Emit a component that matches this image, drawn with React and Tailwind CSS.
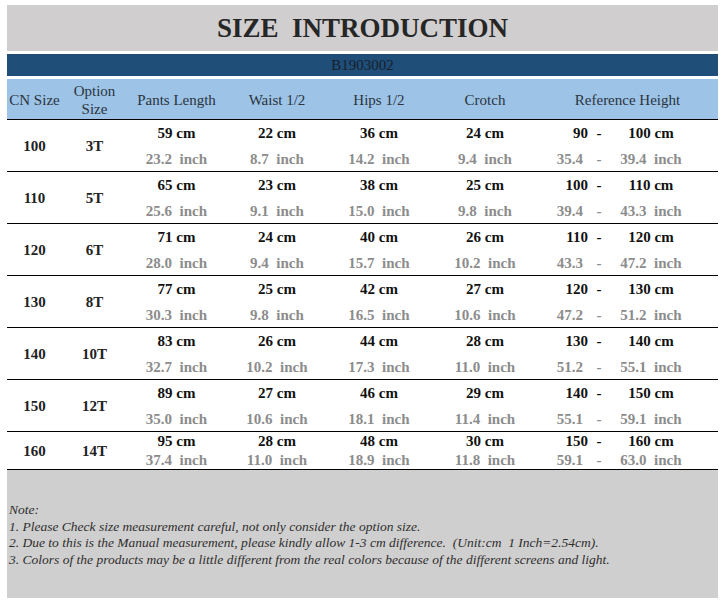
import React from 'react';

const rows = [
    ['100', '3T', ['59', '23.2'], ['22', '8.7'], ['36', '14.2'], ['24', '9.4'], ['90', '100', '35.4', '39.4']],
    ['110', '5T', ['65', '25.6'], ['23', '9.1'], ['38', '15.0'], ['25', '9.8'], ['100', '110', '39.4', '43.3']],
    ['120', '6T', ['71', '28.0'], ['24', '9.4'], ['40', '15.7'], ['26', '10.2'], ['110', '120', '43.3', '47.2']],
    ['130', '8T', ['77', '30.3'], ['25', '9.8'], ['42', '16.5'], ['27', '10.6'], ['120', '130', '47.2', '51.2']],
    ['140', '10T', ['83', '32.7'], ['26', '10.2'], ['44', '17.3'], ['28', '11.0'], ['130', '140', '51.2', '55.1']],
    ['150', '12T', ['89', '35.0'], ['27', '10.6'], ['46', '18.1'], ['29', '11.4'], ['140', '150', '55.1', '59.1']],
    ['160', '14T', ['95', '37.4'], ['28', '11.0'], ['48', '18.9'], ['30', '11.8'], ['150', '160', '59.1', '63.0']],
];

const gridCols = 'grid grid-cols-[55px_65px_99px_102px_102px_110px_177px]';

function Measure({ cm, inch, line }) {
    return (
        <div className="flex flex-col items-center">
            <div className={`${line} flex items-center text-[#111] whitespace-pre`}>{cm} cm</div>
            <div className={`${line} flex items-center text-[#8c8c8c] whitespace-pre`}>{inch}  inch</div>
        </div>
    );
}

function Height({ v, line }) {
    const [a, b, c, d] = v;
    return (
        <div className="flex flex-col">
            <div className={`${line} flex items-center text-[#111]`}>
                <span className="w-[48px] text-right">{a}</span>
                <span className="w-[22px] text-center">-</span>
                <span className="w-[82px] text-center whitespace-pre">{b} cm</span>
            </div>
            <div className={`${line} flex items-center text-[#8c8c8c]`}>
                <span className="w-[48px] text-right pr-[5px]">{c}</span>
                <span className="w-[22px] text-center">-</span>
                <span className="w-[82px] text-center whitespace-pre">{d}  inch</span>
            </div>
        </div>
    );
}

export default function App() {
    return (
        <div className="w-[725px] h-[604px] bg-white pt-[5px] px-[7px]" style={{ fontFamily: '"Liberation Serif", "Times New Roman", serif' }}>
            {/* Title */}
            <div className="h-[46px] bg-[#d0cece] flex items-center justify-center text-[27px] font-bold text-[#262626] whitespace-pre">
                SIZE  INTRODUCTION
            </div>

            {/* Style number */}
            <div className="mt-[3px] h-[22px] bg-[#1f4e79] flex items-center justify-center text-[15px] text-[#16202c]">
                B1903002
            </div>

            {/* Header */}
            <div className={`${gridCols} mt-[3px] h-[41px] bg-[#9dc3e6] border-b border-black text-[15px] text-[#2a3440] leading-[18px]`}>
                <div className="flex items-center justify-center pt-[2px]">CN Size</div>
                <div className="flex items-center justify-center text-center pt-[2px]">Option<br />Size</div>
                <div className="flex items-center justify-center pt-[2px]">Pants Length</div>
                <div className="flex items-center justify-center pt-[2px]">Waist 1/2</div>
                <div className="flex items-center justify-center pt-[2px]">Hips 1/2</div>
                <div className="flex items-center justify-center pt-[2px]">Crotch</div>
                <div className="flex items-center justify-center pt-[2px] pr-[2px]">Reference Height</div>
            </div>

            {/* Rows */}
            {rows.map((r, i) => {
                const last = i === rows.length - 1;
                const line = last ? 'h-[19px]' : 'h-[26px]';
                return (
                    <div key={r[0]} className={`${gridCols} ${last ? 'h-[38px]' : 'h-[52px]'} border-b border-black text-[15px] font-bold`}>
                        <div className="flex items-center justify-center text-[#222]">{r[0]}</div>
                        <div className="flex items-center justify-center text-[#222]">{r[1]}</div>
                        <Measure cm={r[2][0]} inch={r[2][1]} line={line} />
                        <Measure cm={r[3][0]} inch={r[3][1]} line={line} />
                        <Measure cm={r[4][0]} inch={r[4][1]} line={line} />
                        <Measure cm={r[5][0]} inch={r[5][1]} line={line} />
                        <Height v={r[6]} line={line} />
                    </div>
                );
            })}

            {/* Notes */}
            <div className="h-[128px] bg-[#d0cfcf] pt-[32px] pl-[2px] text-[13.5px] italic leading-[16.5px] text-[#2e2e2e]">
                <p>Note:</p>
                <p>1. Please Check size measurement careful, not only consider the option size.</p>
                <p className="whitespace-pre">2. Due to this is the Manual measurement, please kindly allow 1-3 cm difference.  (Unit:cm  1 Inch=2.54cm).</p>
                <p>3. Colors of the products may be a little different from the real colors because of the different screens and light.</p>
            </div>
        </div>
    );
}
